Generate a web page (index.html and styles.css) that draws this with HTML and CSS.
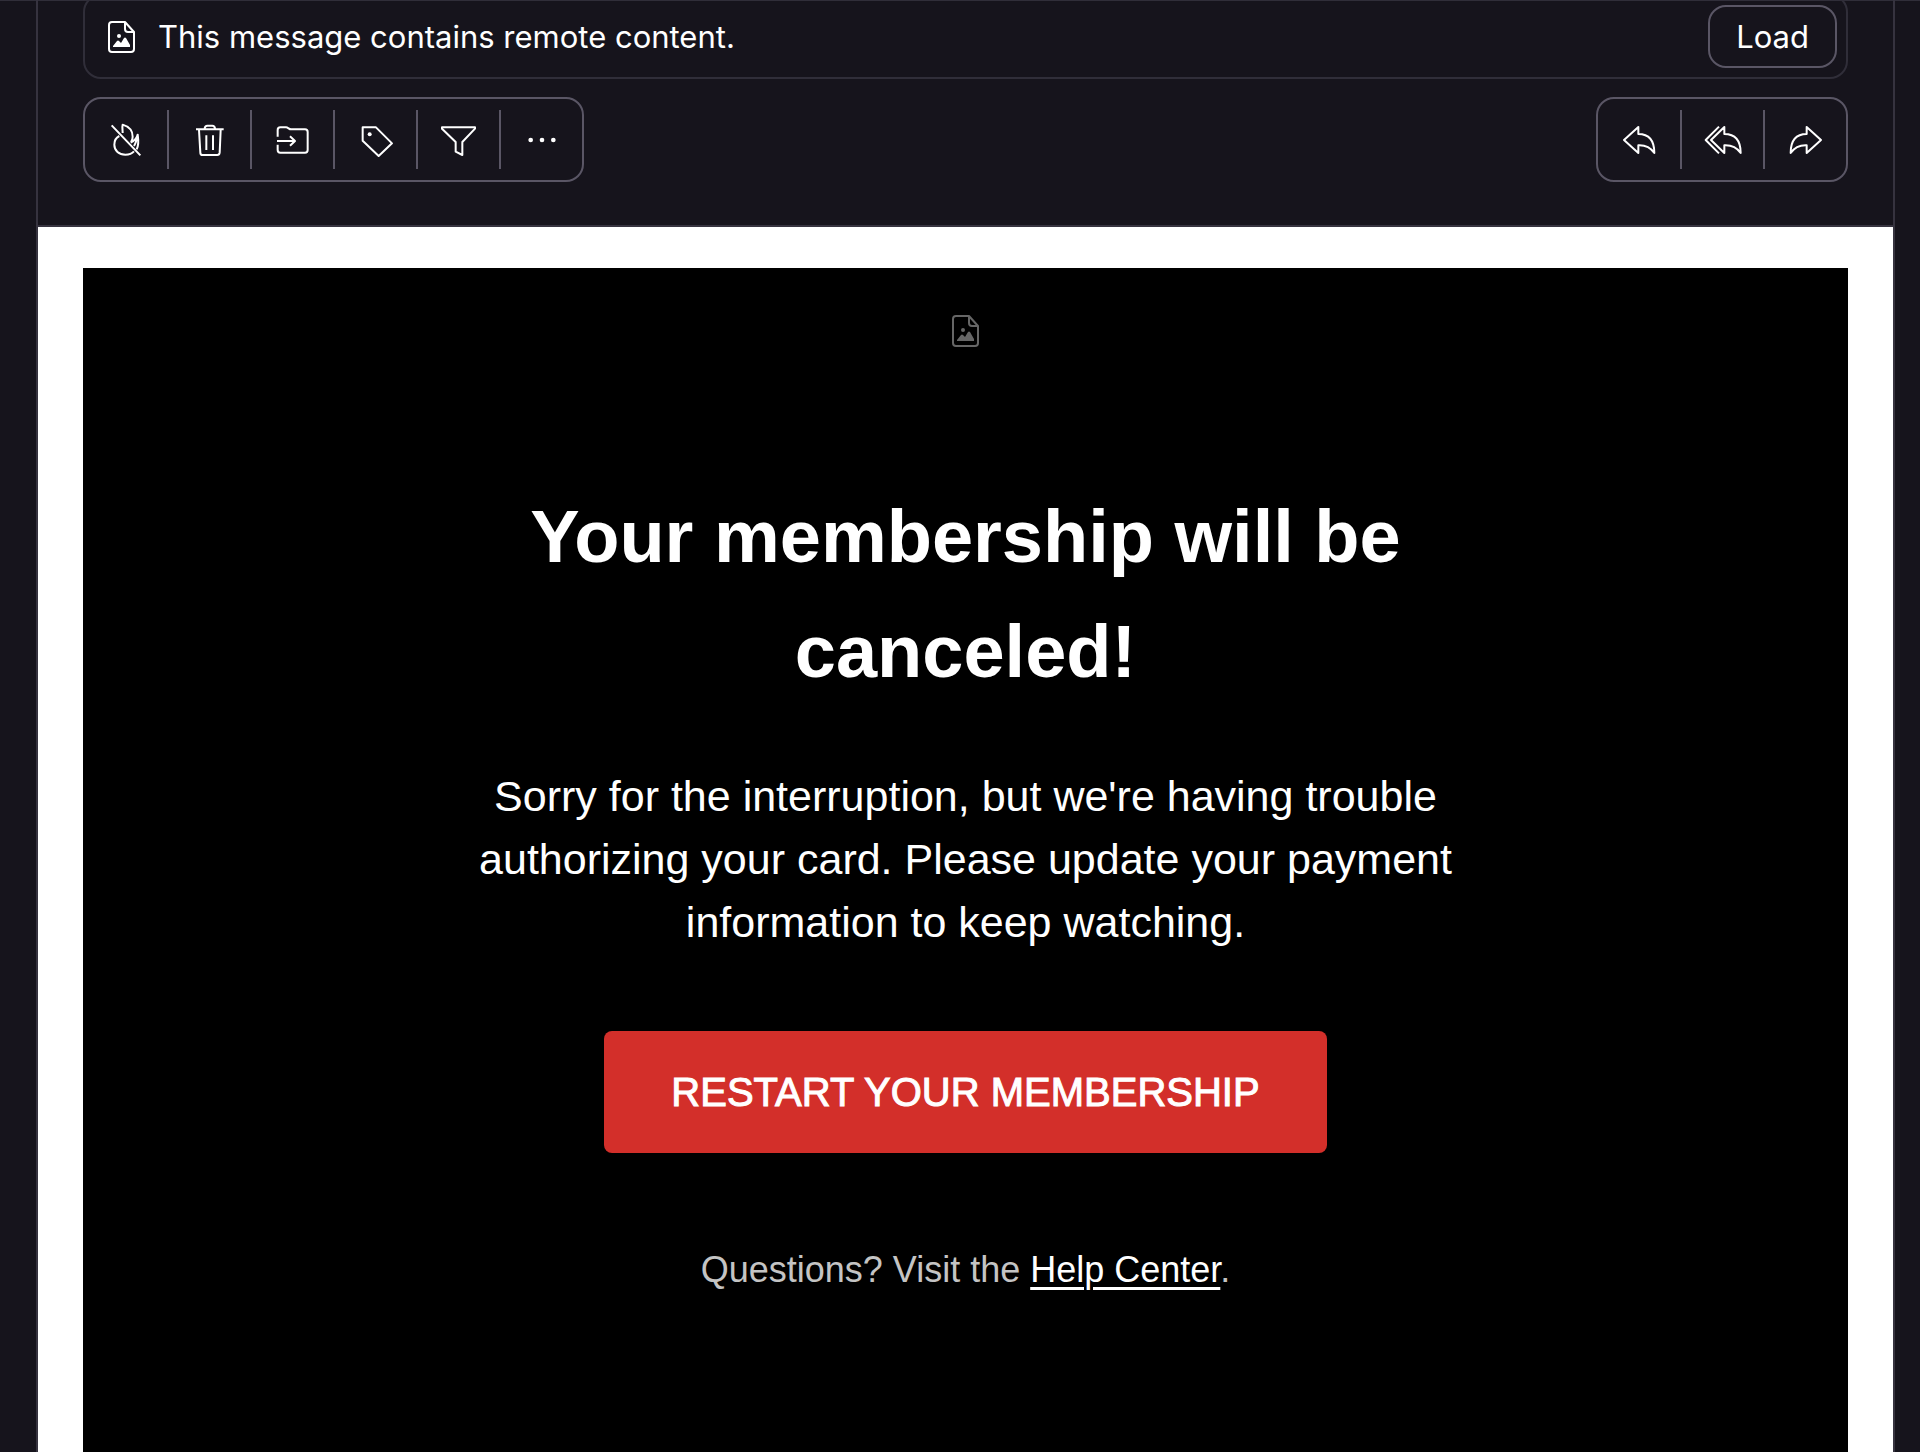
FILE: index.html
```html
<!DOCTYPE html>
<html lang="en">
<head>
<meta charset="utf-8">
<meta name="viewport" content="width=device-width, initial-scale=1">
<title>Your membership will be canceled!</title>
<link rel="stylesheet" href="styles.css">
</head>
<body>
<svg class="sprite" aria-hidden="true">
  <symbol id="file-image" viewBox="0 0 28 32">
    <path d="M17 1H4Q1 1 1 4V28Q1 31 4 31H23Q26 31 26 28V11Z M17 1V8Q17 11 20 11H26" fill="none" stroke="currentColor" stroke-width="2" stroke-linejoin="round"/>
    <circle cx="11" cy="15" r="2" fill="currentColor"/>
    <path d="M5 26V25L9 20Q10 19 11 20L13 22L16 17Q17 16 18 17L22 24V26Z" fill="currentColor"/>
  </symbol>
</svg>
<main class="message">
  <header class="message-header">
    <div class="banner">
      <svg class="file-icon" aria-hidden="true"><use href="#file-image"/></svg>
      <p class="banner-text">This message contains remote content.</p>
      <button class="load" type="button">Load</button>
    </div>
    <div class="toolbars">
      <div class="toolbar" role="toolbar" aria-label="Message actions">
        <button class="tool" type="button" aria-label="Move to spam"><svg class="icon" viewBox="0 0 96 96"><path d="M5 4L91 94M38 27C38 20 36 8 38 2C58 8 68 20 68 38C68 46 66 50 63 54M28 36C16 42 13 52 13 62C13 80 27 92 46 92C58 92 66 89 72 82M62 56C70 52 80 42 83 32C85 46 88 60 80 76M72 66C76 60 80 50 83 32"/></svg></button>
        <button class="tool" type="button" aria-label="Move to trash"><svg class="icon" viewBox="0 0 96 96"><path d="M6 16H89M32 16V13Q33 5 40 5H55Q62 5 63 13V16M15 18L19 86Q19 93 26 93H70Q76 93 77 86L80 18M37 34V78M57 34V78"/></svg></button>
        <button class="tool" type="button" aria-label="Move to folder"><svg class="icon" viewBox="0 0 96 96"><path d="M2 38V18Q2 10 10 10H27C33 10 36 16 42 16H84Q92 16 92 24V78Q92 86 84 86H10Q2 86 2 78V62M0 51H53M39 37L54 51L39 65"/></svg></button>
        <button class="tool" type="button" aria-label="Label as"><svg class="icon" viewBox="0 0 96 96"><path d="M8 10H48L96 58L56 96L8 50Z"/><circle class="dot" cx="29" cy="31" r="6"/></svg></button>
        <button class="tool" type="button" aria-label="Filter on"><svg class="icon" viewBox="0 0 96 96"><path d="M-3 10H96V14L58 54V93L38 83V54L-3 14Z"/></svg></button>
        <button class="tool" type="button" aria-label="More"><svg class="icon" viewBox="0 0 96 96"><g class="dot"><circle cx="14" cy="48" r="7"/><circle cx="48" cy="48" r="7"/><circle cx="82" cy="48" r="7"/></g></svg></button>
      </div>
      <div class="toolbar" role="toolbar" aria-label="Reply actions">
        <button class="tool" type="button" aria-label="Reply"><svg class="icon" viewBox="0 0 96 96"><path d="M3 48L46 9V30C76 30 94 48 94 87C82 70 66 63 46 64V87Z"/></svg></button>
        <button class="tool" type="button" aria-label="Reply all"><svg class="icon" viewBox="0 0 96 96"><path d="M36 8L-4 48L36 88M12 48L52 9V30C82 30 101 48 101 87C89 70 73 63 52 64V87Z"/></svg></button>
        <button class="tool" type="button" aria-label="Forward"><svg class="icon" viewBox="0 0 96 96"><path d="M93 48L50 9V30C20 30 2 48 2 87C14 70 30 63 50 64V87Z"/></svg></button>
      </div>
    </div>
  </header>
  <div class="message-body">
    <article class="email">
      <svg class="file-icon placeholder" role="img" aria-label="Remote image"><use href="#file-image"/></svg>
      <h1 class="title">Your membership will be canceled!</h1>
      <p class="lead">Sorry for the interruption, but we're having trouble authorizing your card. Please update your payment information to keep watching.</p>
      <a class="cta" href="#restart">RESTART YOUR MEMBERSHIP</a>
      <p class="questions">Questions? Visit the <a class="help" href="#help">Help Center</a>.</p>
    </article>
  </div>
</main>
</body>
</html>
```
FILE: styles.css
```css
* { box-sizing: border-box; }

body {
  margin: 0;
  min-height: 100vh;
  display: flex;
  padding: 0 25px 0 36px;
  background: #16141c;
  color: #fff;
  font-family: Inter, "Liberation Sans", sans-serif;
  font-optical-sizing: none;
  box-shadow: inset 0 1px #302e39;
}

h1, p { margin: 0; }

button {
  margin: 0;
  padding: 0;
  border: 0;
  background: none;
  color: inherit;
  font: inherit;
  cursor: pointer;
}

.sprite { position: absolute; width: 0; height: 0; }

.message {
  flex: 1;
  min-width: 0;
  display: flex;
  flex-direction: column;
  border: solid #36333f;
  border-width: 0 2px;
  overflow: hidden;
}

.message-header {
  display: flex;
  flex-direction: column;
  gap: 18px;
  margin-top: -6px;
  padding: 0 45px 43px;
  border-bottom: 2px solid #36333f;
}

.banner {
  display: flex;
  align-items: center;
  gap: 22px;
  padding: 9px 9px 9px 23px;
  border: 2px solid #302e39;
  border-radius: 18px;
}

.banner-text {
  flex: 1;
  font-size: 31px;
  line-height: 48px;
}

.file-icon { width: 28px; height: 32px; flex: none; }

.load {
  height: 63px;
  padding: 0 26px;
  border: 2px solid #5a5665;
  border-radius: 18px;
  font-size: 31px;
}

.toolbars {
  display: flex;
  justify-content: space-between;
}

.toolbar {
  display: flex;
  height: 85px;
  padding: 11px 0;
  border: 2px solid #5a5665;
  border-radius: 18px;
}

.tool {
  width: 82px;
  display: flex;
  align-items: center;
  justify-content: center;
}

.tool + .tool {
  width: 83px;
  border-left: 2px solid #5a5665;
}

.icon {
  width: 32px;
  height: 32px;
  overflow: visible;
  fill: none;
  stroke: currentColor;
  stroke-width: 6;
  stroke-linejoin: round;
}

.dot { fill: currentColor; stroke: none; }

.message-body {
  flex: 1;
  display: flex;
  padding: 41px 45px 0;
  background: #fff;
}

.email {
  flex: 1;
  display: flex;
  flex-direction: column;
  align-items: center;
  padding: 47px 40px 140px;
  background: #000;
  font-family: "Liberation Sans", Arial, sans-serif;
  text-align: center;
}

.placeholder { color: #666; }

.title {
  max-width: 1000px;
  margin-top: 132px;
  font-size: 74px;
  line-height: 115px;
}

.lead {
  max-width: 1000px;
  margin-top: 56px;
  font-size: 43px;
  line-height: 63px;
}

.cta {
  margin-top: 77px;
  padding: 32px 67px;
  border-radius: 8px;
  background: #d32f2a;
  color: #fff;
  font-size: 40px;
  line-height: 58px;
  text-decoration: none;
  -webkit-text-stroke: 1px #fff;
}

.questions {
  margin-top: 90px;
  color: #c4c4c4;
  font-size: 36px;
  line-height: 54px;
}

.help {
  color: #fff;
  text-decoration-thickness: 3px;
  text-underline-offset: 5px;
}
```
